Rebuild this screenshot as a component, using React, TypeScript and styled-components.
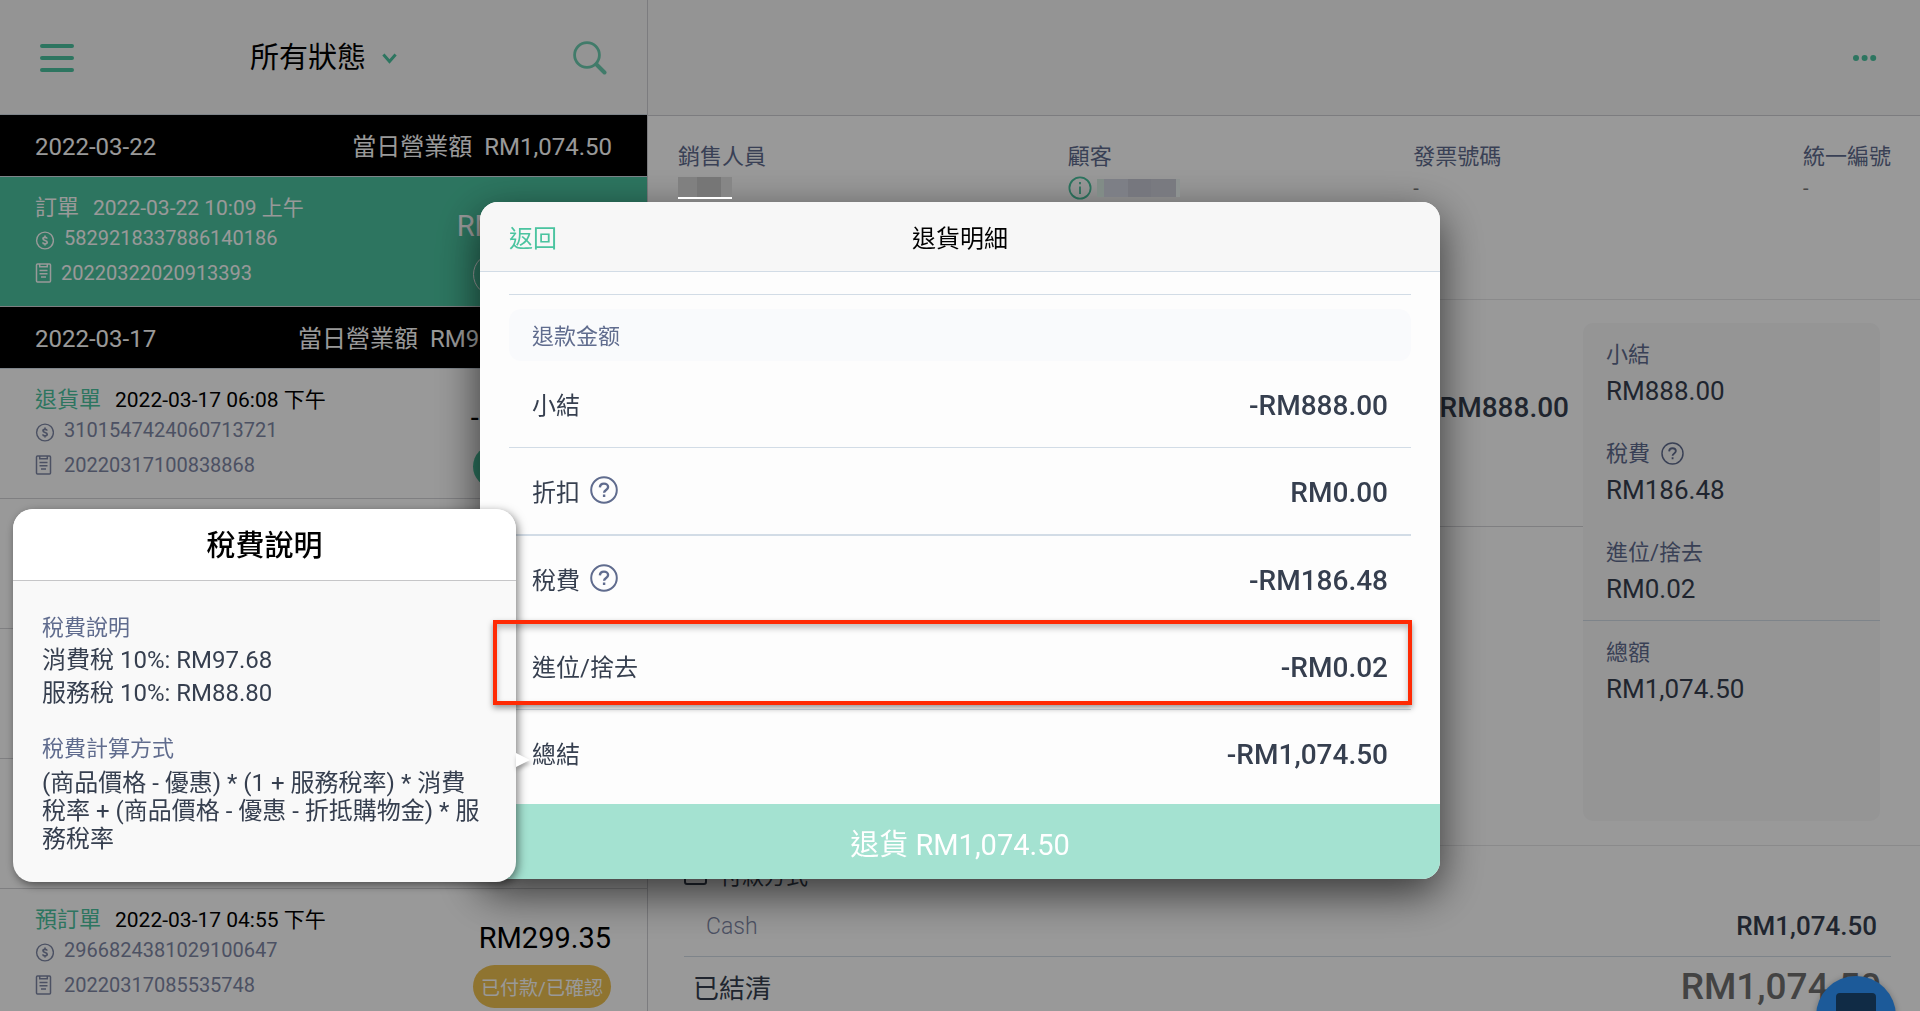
import React from "react";
import styled, { createGlobalStyle, css } from "styled-components";

const color = {
  green: "#4bc4a0",
  ink: "#363f4f",
  label: "#606c8e",
  muted: "#7f88a6",
  line: "#d2dce6",
  chrome: "#f7f7f7",
};

const GlobalStyle = createGlobalStyle`
  * { box-sizing: border-box; }
  body {
    margin: 0;
    background: #fff;
    color: #000;
    font-family: Roboto, "Noto Sans CJK TC", sans-serif;
  }
  button, select { font: inherit; color: inherit; border: 0; padding: 0; background: none; cursor: pointer; }
  h1, h2, h3, p, dl, dd, ul { margin: 0; padding: 0; font-weight: 400; }
  svg { display: block; flex: none; }
`;

const Page = styled.div`
  display: flex;
  height: 100vh;
  overflow: hidden;
`;

/* ---------- order list ---------- */

const Sidebar = styled.aside`
  flex: none;
  width: 648px;
  border-right: 1px solid #cfcfd4;
`;

const SidebarHeader = styled.header`
  display: flex;
  align-items: center;
  justify-content: space-between;
  height: 115px;
  padding: 2px 40px 0;
  background: ${color.chrome};
  border-bottom: 1px solid ${color.line};
`;

const IconButton = styled.button`
  display: flex;
  color: ${color.green};
`;

const StatusFilter = styled.label`
  display: grid;
  align-items: center;

  select,
  svg {
    grid-area: 1 / 1;
  }
  svg {
    justify-self: end;
    pointer-events: none;
    color: ${color.green};
  }
`;

const StatusSelect = styled.select`
  appearance: none;
  padding-right: 30px;
  font-size: 29px;
  line-height: 40px;
`;

const DayBar = styled.div`
  display: flex;
  align-items: center;
  justify-content: space-between;
  height: 62px;
  padding: 2px 35px 0;
  background: #000;
  border-bottom: 1px solid ${color.line};
  color: #fff;
  font-size: 24px;
  line-height: 32px;
`;

const DayTotal = styled.span`
  display: flex;
  gap: 12px;
`;

const DayAmount = styled.span<{ $width?: number }>`
  min-width: ${(p) => (p.$width ? `${p.$width}px` : "auto")};
`;

const Order = styled.article<{ $selected?: boolean }>`
  display: flex;
  justify-content: space-between;
  height: 130px;
  padding: 16px 36px 0 35px;
  border-bottom: 1px solid #d4d4d8;
  color: ${color.muted};
  ${(p) =>
    p.$selected &&
    css`
      background: ${color.green};
      color: #fff;
    `}
`;

const OrderTitle = styled.h3<{ $selected?: boolean }>`
  display: flex;
  gap: 14px;
  font-size: 21px;
  line-height: 30px;
  color: ${(p) => (p.$selected ? "#fff" : "#000")};

  span {
    font-size: 22px;
    color: ${(p) => (p.$selected ? "#fff" : color.green)};
  }
`;

const OrderCode = styled.p<{ $spaced?: boolean; $tight?: boolean }>`
  display: flex;
  align-items: center;
  gap: ${(p) => (p.$tight ? 7 : 10)}px;
  margin-top: ${(p) => (p.$spaced ? 5 : 0)}px;
  font-size: 20px;
  line-height: 30px;
`;

const OrderSide = styled.div`
  display: flex;
  flex-direction: column;
  align-items: flex-end;
  gap: 10px;
  padding-top: 16px;
`;

const OrderPrice = styled.span<{ $selected?: boolean }>`
  font-size: 29px;
  line-height: 34px;
  color: ${(p) => (p.$selected ? "#fff" : "#000")};
`;

const Pill = styled.span<{ $tone: "outline" | "green" | "amber" }>`
  display: flex;
  align-items: center;
  justify-content: center;
  width: 138px;
  height: 43px;
  border-radius: 22px;
  color: #fff;
  font-size: 19px;
  background: ${(p) => ({ outline: "transparent", green: color.green, amber: "#efc150" })[p.$tone]};
  border: ${(p) => (p.$tone === "outline" ? "1px solid #fff" : "0")};
`;

/* ---------- order detail ---------- */

const Detail = styled.main`
  flex: 1;
  min-width: 0;
  color: ${color.ink};
`;

const DetailHeader = styled.header`
  display: flex;
  align-items: center;
  justify-content: flex-end;
  height: 116px;
  padding: 0 43px;
  background: ${color.chrome};
  border-bottom: 1px solid #cfcfd4;
`;

const InfoBar = styled.section`
  display: flex;
  justify-content: space-between;
  height: 184px;
  padding: 25px 29px 0 30px;
  border-bottom: 1px solid #e6e6e8;
`;

const InfoLabel = styled.h3`
  font-size: 22px;
  line-height: 32px;
  color: ${color.label};
`;

const InfoValue = styled.div`
  display: flex;
  align-items: center;
  gap: 5px;
  width: 0;
  height: 30px;
  font-size: 20px;
  color: #777;
`;

const Redacted = styled.span<{ $underline?: boolean }>`
  position: relative;
  z-index: 4;
  display: flex;
  height: ${(p) => (p.$underline ? 22 : 18)}px;
  border-bottom: ${(p) => (p.$underline ? "2px solid #fff" : "0")};
`;

const Tile = styled.i<{ $w: number; $tone: string }>`
  width: ${(p) => p.$w}px;
  background: ${(p) => p.$tone};
`;

const SummarySection = styled.section`
  display: flex;
  padding: 23px 40px 24px 29px;
  border-bottom: 1px solid #e6e6e8;
`;

const ItemRow = styled.div`
  flex: 1;
  display: flex;
  justify-content: flex-end;
  align-items: center;
  height: 204px;
  padding: 0 14px 34px;
  border-bottom: 1px solid #d4d4d8;
  font-size: 28px;
  font-weight: 500;
  line-height: 36px;
`;

const SummaryCard = styled.dl`
  width: 297px;
  height: 498px;
  border-radius: 10px;
  background: #f8f8f9;
`;

const SummaryItem = styled.div<{ $total?: boolean }>`
  padding: 13px 23px 12px;
  border-top: ${(p) => (p.$total ? `1px solid ${color.line}` : "0")};
  line-height: 37px;

  dt {
    display: flex;
    align-items: center;
    gap: 11px;
    font-size: 22px;
    color: ${color.label};
  }
  dd {
    font-size: 26px;
  }
`;

const Payment = styled.section`
  padding: 15px 29px 0 36px;
`;

const PaymentTitle = styled.h3`
  display: flex;
  align-items: center;
  gap: 13px;
  font-size: 22px;
  line-height: 32px;
`;

const PaymentRow = styled.div`
  display: flex;
  align-items: center;
  justify-content: space-between;
  height: 64px;
  padding: 3px 14px 0 22px;
  border-bottom: 1px solid ${color.line};
  font-size: 26px;
  font-weight: 500;

  span {
    font-size: 23px;
    font-weight: 300;
    color: ${color.muted};
  }
`;

const SettledRow = styled.div`
  display: flex;
  align-items: center;
  justify-content: space-between;
  height: 58px;
  padding: 0 10px 0 9px;
  font-size: 26px;

  strong {
    font-size: 37px;
    font-weight: 500;
    color: #707070;
  }
`;

const ChatButton = styled.button`
  position: fixed;
  right: 24px;
  bottom: -45px;
  display: flex;
  justify-content: center;
  width: 80px;
  height: 80px;
  padding-top: 17px;
  border-radius: 50%;
  background: #2f96ff;
  box-shadow: 0 1px 6px rgba(0, 0, 0, 0.3);
`;

/* ---------- refund dialog ---------- */

const Backdrop = styled.div`
  position: fixed;
  inset: 0;
  z-index: 1;
  background: rgba(0, 0, 0, 0.4);
`;

const DialogLayer = styled.div`
  position: fixed;
  inset: 0;
  z-index: 3;
  display: flex;
  justify-content: center;
  align-items: flex-start;
  padding-top: 202px;
`;

const Dialog = styled.section`
  width: 50%;
  min-width: 720px;
  overflow: hidden;
  border-radius: 18px;
  background: #fdfdfd;
  box-shadow: 0 14px 44px rgba(0, 0, 0, 0.65);
  color: ${color.ink};
`;

const DialogHeader = styled.header`
  display: grid;
  grid-template-columns: 1fr auto 1fr;
  align-items: center;
  justify-items: start;
  height: 70px;
  padding: 0 29px;
  background: ${color.chrome};
  border-bottom: 1px solid ${color.line};
  font-size: 24px;

  button {
    color: ${color.green};
  }
  h2 {
    font-size: 24px;
    color: #000;
  }
`;

const DialogBody = styled.div`
  padding: 22px 29px 8px;
`;

const GroupTitle = styled.h3`
  padding: 4px 23px 0;
  border-radius: 12px;
  background: #f9fafc;
  font-size: 22px;
  line-height: 48px;
  color: ${color.label};
`;

const GroupRule = styled.hr`
  height: 1px;
  margin: 0 0 14px;
  border: 0;
  background: ${color.line};
`;

const AmountRow = styled.div<{ $rule: number }>`
  position: relative;
  display: flex;
  align-items: center;
  justify-content: space-between;
  height: ${(p) => 86 + p.$rule}px;
  padding: 0 23px;
  border-bottom: ${(p) => p.$rule}px solid ${color.line};
  font-size: 24px;

  dt {
    display: flex;
    align-items: center;
    gap: 10px;
    padding-bottom: 2px;
  }
  dd {
    padding-top: 2px;
    font-size: 28px;
    font-weight: 500;
  }
`;

const Highlight = styled.div`
  position: absolute;
  z-index: 3;
  inset: -3px -1px 4px -16px;
  border: 4px solid #ff2a04;
  box-shadow: 0 3px 6px rgba(0, 0, 0, 0.4), inset 0 4px 6px rgba(0, 0, 0, 0.25);
`;

const RefundButton = styled.button`
  width: 100%;
  height: 75px;
  background: #a4e2d1;
  color: #fff;
  font-size: 29px;
`;

/* ---------- tax popover ---------- */

const Popover = styled.aside`
  position: absolute;
  z-index: 2;
  left: 13px;
  top: 509px;
  width: 503px;
  border-radius: 20px;
  background: #f9f9f9;
  box-shadow: 2px 3px 10px rgba(0, 0, 0, 0.5);
  color: ${color.ink};

  &::after {
    content: "";
    position: absolute;
    left: 100%;
    top: 244px;
    border: 7px solid transparent;
    border-left: 14px solid #fff;
    border-right: 0;
    filter: drop-shadow(1px 3px 2px rgba(0, 0, 0, 0.3));
  }
`;

const PopoverTitle = styled.h2`
  height: 72px;
  padding-top: 2px;
  border-bottom: 1px solid #c6c6c8;
  border-radius: 20px 20px 0 0;
  background: #fff;
  color: #000;
  font-size: 29px;
  font-weight: 500;
  line-height: 70px;
  text-align: center;
`;

const PopoverBody = styled.div`
  padding: 30px 34px 29px 29px;
  font-size: 24px;
  line-height: 33px;
`;

const PopoverLabel = styled.h3`
  font-size: 22px;
  color: ${color.label};
`;

const Formula = styled.p`
  padding-top: 4px;
  line-height: 28px;
`;

const PopoverGroup = styled.section`
  & + & {
    margin-top: 22px;
  }
`;

/* ---------- icons ---------- */

const MenuIcon = () => (
  <svg width="34" height="30" viewBox="0 0 34 30" stroke="currentColor" strokeWidth="4" strokeLinecap="round">
    <path d="M2 3h30M2 15h30M2 27h30" />
  </svg>
);

const ChevronIcon = () => (
  <svg width="15" height="11" viewBox="0 0 15 11" fill="none" stroke="currentColor" strokeWidth="3">
    <path d="M1.4 1.4 7.5 8.4l6.1-7" />
  </svg>
);

const SearchIcon = () => (
  <svg width="34" height="34" viewBox="0 0 34 34" fill="none" stroke="currentColor" strokeLinecap="round" opacity=".8">
    <circle cx="14" cy="14" r="12.4" strokeWidth="2.8" />
    <path d="m23.5 23.5 8 8" strokeWidth="4" />
  </svg>
);

const MoreIcon = () => (
  <svg width="24" height="6" viewBox="0 0 24 6" fill="currentColor">
    <circle cx="3" cy="3" r="3" />
    <circle cx="11.6" cy="3" r="3" />
    <circle cx="20.2" cy="3" r="3" />
  </svg>
);

const CoinIcon = () => (
  <svg width="19" height="24" viewBox="0 0 19 24" fill="none" stroke="currentColor" strokeWidth="1.4">
    <circle cx="10" cy="14.5" r="8.4" />
    <path
      d="M12.1 12.6c-.2-.9-1-1.3-2.1-1.3s-2 .5-2 1.5c0 2.2 4.2 1.1 4.2 3.4 0 1.1-.9 1.6-2.2 1.6s-2.1-.5-2.3-1.5M10 9.4v2M10 17.6v2"
      strokeWidth="1.7"
    />
  </svg>
);

const ReceiptIcon = () => (
  <svg width="19" height="20" viewBox="0 0 19 20" fill="none" stroke="currentColor" strokeWidth="1.5">
    <rect x="1.5" y="1" width="14" height="18" rx="1" />
    <path d="M4.7 1v2.8h7.6V1M4.5 7.5h8M4.5 10.7h8M6 13.9h5" />
  </svg>
);

const InfoIcon = () => (
  <svg width="24" height="24" viewBox="0 0 24 24" fill="none" stroke={color.green} strokeWidth="1.8">
    <circle cx="12" cy="12" r="10.6" />
    <path d="M12 10.5v7.5M12 6v2.2" />
  </svg>
);

const HelpIcon = ({ size, weight }: { size: number; weight: number }) => (
  <svg width={size} height={size} viewBox="0 0 28 28" fill="none" stroke="currentColor" strokeWidth={weight}>
    <circle cx="14" cy="14" r="12.8" />
    <path d="M9.9 11.4c.1-2.3 1.8-3.8 4.1-3.8s4.1 1.4 4.1 3.5c0 2.9-4 2.9-4 5.7M14.1 18.6v2.4" strokeWidth={weight + 0.4} />
  </svg>
);

const CardIcon = () => (
  <svg width="23" height="16" viewBox="0 0 23 16" fill="none" stroke="currentColor" strokeWidth="2">
    <rect x="1" y="1" width="21" height="14" rx="2" />
    <path d="M1 5.5h21" />
  </svg>
);

const ChatIcon = () => (
  <svg width="40" height="46" viewBox="0 0 40 46" fill="#1b4873">
    <path d="M4 0h32a4 4 0 0 1 4 4v42l-8-6H4a4 4 0 0 1-4-4V4a4 4 0 0 1 4-4z" />
  </svg>
);

const HelpButton = styled.button`
  display: flex;
  color: ${color.label};
`;

/* ---------- data ---------- */

type Entry = {
  kind: string;
  time: string;
  coin: string;
  receipt: string;
  price: string;
  status: string;
  tone: "outline" | "green" | "amber";
  selected?: boolean;
};

const today: Entry = {
  kind: "訂單",
  time: "2022-03-22 10:09 上午",
  coin: "5829218337886140186",
  receipt: "20220322020913393",
  price: "RM1,074.50",
  status: "",
  tone: "outline",
  selected: true,
};

const refund: Entry = {
  kind: "退貨單",
  time: "2022-03-17 06:08 下午",
  coin: "3101547424060713721",
  receipt: "20220317100838868",
  price: "-RM299.35",
  status: "",
  tone: "green",
};

const preorder: Entry = {
  kind: "預訂單",
  time: "2022-03-17 04:55 下午",
  coin: "2966824381029100647",
  receipt: "20220317085535748",
  price: "RM299.35",
  status: "已付款/已確認",
  tone: "amber",
};

const amounts = [
  { label: "小結", value: "-RM888.00", rule: 1 },
  { label: "折扣", value: "RM0.00", rule: 2, help: true },
  { label: "稅費", value: "-RM186.48", rule: 1, help: true },
  { label: "進位/捨去", value: "-RM0.02", rule: 1, highlight: true },
  { label: "總結", value: "-RM1,074.50", rule: 0 },
];

const summary = [
  { label: "小結", value: "RM888.00" },
  { label: "稅費", value: "RM186.48", help: true },
  { label: "進位/捨去", value: "RM0.02" },
  { label: "總額", value: "RM1,074.50", total: true },
];

const OrderCard = ({ entry }: { entry: Entry }) => (
  <Order $selected={entry.selected}>
    <div>
      <OrderTitle $selected={entry.selected}>
        <span>{entry.kind}</span>
        {entry.time}
      </OrderTitle>
      <OrderCode>
        <CoinIcon />
        {entry.coin}
      </OrderCode>
      <OrderCode $spaced $tight={entry.selected}>
        <ReceiptIcon />
        {entry.receipt}
      </OrderCode>
    </div>
    <OrderSide>
      <OrderPrice $selected={entry.selected}>{entry.price}</OrderPrice>
      <Pill $tone={entry.tone}>{entry.status}</Pill>
    </OrderSide>
  </Order>
);

export default function App() {
  return (
    <>
      <GlobalStyle />
      <Page lang="zh-Hant">
        <Sidebar>
          <SidebarHeader>
            <IconButton aria-label="選單">
              <MenuIcon />
            </IconButton>
            <StatusFilter>
              <StatusSelect aria-label="狀態">
                <option>所有狀態</option>
              </StatusSelect>
              <ChevronIcon />
            </StatusFilter>
            <IconButton aria-label="搜尋">
              <SearchIcon />
            </IconButton>
          </SidebarHeader>
          <DayBar>
            2022-03-22
            <DayTotal>
              當日營業額<DayAmount>RM1,074.50</DayAmount>
            </DayTotal>
          </DayBar>
          <OrderCard entry={today} />
          <DayBar>
            2022-03-17
            <DayTotal>
              當日營業額<DayAmount $width={182}>RM9</DayAmount>
            </DayTotal>
          </DayBar>
          <OrderCard entry={refund} />
          <Order />
          <Order />
          <Order />
          <OrderCard entry={preorder} />
        </Sidebar>

        <Detail>
          <DetailHeader>
            <IconButton aria-label="更多">
              <MoreIcon />
            </IconButton>
          </DetailHeader>
          <InfoBar>
            <div>
              <InfoLabel>銷售人員</InfoLabel>
              <InfoValue>
                <Redacted $underline>
                  <Tile $w={19} $tone="#808080" />
                  <Tile $w={24} $tone="#767676" />
                  <Tile $w={11} $tone="#868686" />
                </Redacted>
              </InfoValue>
            </div>
            <div>
              <InfoLabel>顧客</InfoLabel>
              <InfoValue>
                <InfoIcon />
                <Redacted>
                  <Tile $w={7} $tone="#818c87" />
                  <Tile $w={24} $tone="#7d7f86" />
                  <Tile $w={23} $tone="#76777e" />
                  <Tile $w={25} $tone="#797a80" />
                  <Tile $w={4} $tone="#8d9291" />
                </Redacted>
              </InfoValue>
            </div>
            <div>
              <InfoLabel>發票號碼</InfoLabel>
              <InfoValue>-</InfoValue>
            </div>
            <div>
              <InfoLabel>統一編號</InfoLabel>
              <InfoValue>-</InfoValue>
            </div>
          </InfoBar>
          <SummarySection>
            <ItemRow>RM888.00</ItemRow>
            <SummaryCard>
              {summary.map((s) => (
                <SummaryItem key={s.label} $total={s.total}>
                  <dt>
                    {s.label}
                    {s.help && (
                      <HelpButton aria-label="稅費說明">
                        <HelpIcon size={23} weight={1.8} />
                      </HelpButton>
                    )}
                  </dt>
                  <dd>{s.value}</dd>
                </SummaryItem>
              ))}
            </SummaryCard>
          </SummarySection>
          <Payment>
            <PaymentTitle>
              <CardIcon />
              付款方式
            </PaymentTitle>
            <PaymentRow>
              <span>Cash</span>
              RM1,074.50
            </PaymentRow>
            <SettledRow>
              已結清
              <strong>RM1,074.50</strong>
            </SettledRow>
          </Payment>
        </Detail>

        <ChatButton aria-label="聊天">
          <ChatIcon />
        </ChatButton>
      </Page>

      <Backdrop />
      <DialogLayer lang="zh-Hant">
        <Dialog role="dialog" aria-labelledby="refund-title">
          <DialogHeader>
            <button>返回</button>
            <h2 id="refund-title">退貨明細</h2>
          </DialogHeader>
          <DialogBody>
            <GroupRule />
            <GroupTitle>退款金额</GroupTitle>
            <dl>
              {amounts.map((a) => (
                <AmountRow key={a.label} $rule={a.rule}>
                  <dt>
                    {a.label}
                    {a.help && (
                      <HelpButton aria-label={`${a.label}說明`}>
                        <HelpIcon size={28} weight={2} />
                      </HelpButton>
                    )}
                  </dt>
                  <dd>{a.value}</dd>
                  {a.highlight && <Highlight />}
                </AmountRow>
              ))}
            </dl>
          </DialogBody>
          <RefundButton>退貨 RM1,074.50</RefundButton>
        </Dialog>

        <Popover>
          <PopoverTitle>稅費說明</PopoverTitle>
          <PopoverBody>
            <PopoverGroup>
              <PopoverLabel>稅費說明</PopoverLabel>
              <p>消費稅 10%: RM97.68</p>
              <p>服務稅 10%: RM88.80</p>
            </PopoverGroup>
            <PopoverGroup>
              <PopoverLabel>稅費計算方式</PopoverLabel>
              <Formula>(商品價格 - 優惠) * (1 + 服務稅率) * 消費稅率 + (商品價格 - 優惠 - 折抵購物金) * 服務稅率</Formula>
            </PopoverGroup>
          </PopoverBody>
        </Popover>
      </DialogLayer>
    </>
  );
}
